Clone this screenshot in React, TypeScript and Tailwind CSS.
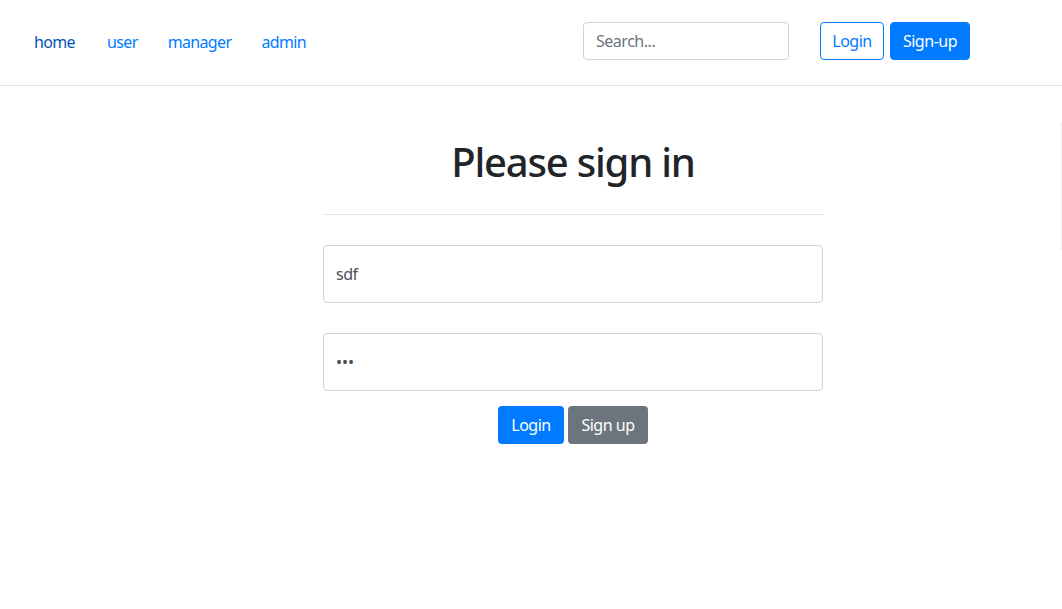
export default function App() {
  return (
    <div className="min-h-[609px] bg-white font-['Noto_Sans',sans-serif] text-[#212529]">
      {/* Navbar */}
      <nav className="flex h-[86px] items-start border-b border-[#dee2e6] pl-[18px] pt-[22px]">
        <ul className="flex items-center text-base tracking-[-0.04em]">
          <li>
            <a className="block px-4 py-2 leading-[24px] text-[#0056b3]" href="#">
              home
            </a>
          </li>
          <li>
            <a className="block py-2 pl-4 pr-[15px] leading-[24px] text-[#007bff]" href="#">
              user
            </a>
          </li>
          <li>
            <a className="block py-2 pl-[15px] pr-[15px] leading-[24px] text-[#007bff]" href="#">
              manager
            </a>
          </li>
          <li>
            <a className="block py-2 pl-[15px] pr-4 leading-[24px] text-[#007bff]" href="#">
              admin
            </a>
          </li>
        </ul>
        <div className="ml-auto mr-[92px] flex items-center">
          <input
            className="h-[38px] w-[206px] rounded border border-[#ced4da] px-3 text-base tracking-[-0.03em] text-[#495057] placeholder:text-[#6c757d] outline-none"
            placeholder="Search..."
          />
          <button className="ml-[31px] h-[38px] w-[64px] rounded border border-[#007bff] text-base tracking-[-0.03em] text-[#007bff]">
            Login
          </button>
          <button className="ml-[6px] h-[38px] w-[80px] rounded border border-[#007bff] bg-[#007bff] text-base tracking-[-0.03em] text-white">
            Sign-up
          </button>
        </div>
      </nav>

      {/* Sign in form */}
      <div className="flex">
        <form className="ml-[323px] w-[500px] pt-[52px]">
          <h1 className="text-center text-[40px] font-medium leading-[1.2] tracking-[-0.03em]">Please sign in</h1>
          <hr className="mt-[28px] border-t border-[#dee2e6]" />
          <div className="mt-[30px]">
            <input
              className="h-[58px] w-full rounded border border-[#ced4da] px-3 text-base tracking-[-0.03em] text-[#495057] outline-none"
              defaultValue="sdf"
            />
          </div>
          <div className="mt-[30px]">
            <input
              type="password"
              className="h-[58px] w-full rounded border border-[#ced4da] px-3 text-base text-[#495057] outline-none"
              defaultValue="sdf"
            />
          </div>
          <div className="mt-[15px] flex justify-center gap-[4px]">
            <button className="h-[38px] w-[66px] rounded bg-[#007bff] text-base tracking-[-0.03em] text-white">Login</button>
            <button className="h-[38px] w-[80px] rounded bg-[#6c757d] text-base tracking-[-0.03em] text-white">Sign up</button>
          </div>
        </form>
        <div className="ml-auto mt-[36px] h-[128px] w-px bg-[#f1f1f1]" />
      </div>
    </div>
  );
}
